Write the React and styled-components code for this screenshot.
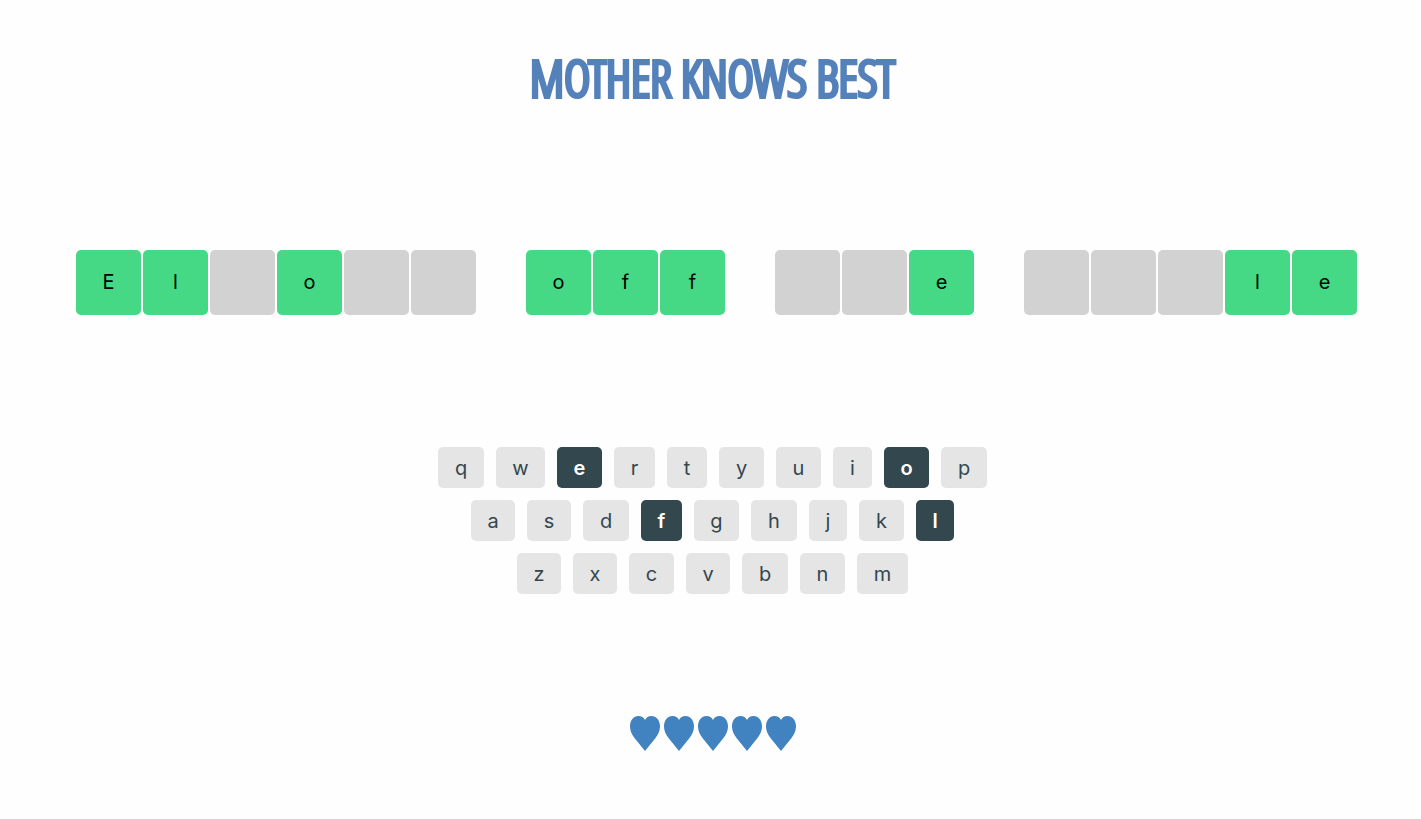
import React from "react";
import styled, { createGlobalStyle } from "styled-components";

const GlobalStyle = createGlobalStyle`
  *, *::before, *::after { box-sizing: border-box; }
  body {
    margin: 0;
    background: #fefefe;
    color: #000;
    font-family: Inter, "Liberation Sans", sans-serif;
    font-size: 20px;
  }
`;

const Page = styled.main`
  display: flex;
  flex-direction: column;
  align-items: center;
  padding: 46px 0 64px 4px;
`;

const Title = styled.h1`
  margin: 0 0 140px;
  color: #5581bb;
  font-family: "Open Sans Condensed Light", "Open Sans Condensed", "Open Sans", sans-serif;
  font-size: 50px;
  font-weight: 300;
  line-height: 64px;
  text-transform: uppercase;
  white-space: nowrap;
  -webkit-text-stroke: 4px #5581bb;
`;

const Phrase = styled.section`
  display: flex;
  justify-content: center;
  gap: 50px;
  margin-bottom: 132px;
  padding-left: 8px;
`;

const Word = styled.div`
  display: flex;
  gap: 2px;
`;

const Cell = styled.span`
  display: flex;
  align-items: center;
  justify-content: center;
  width: 65px;
  height: 65px;
  padding-bottom: 2px;
  border-radius: 5px;
  background: ${({ $open }) => ($open ? "#45d985" : "#d2d2d2")};
`;

const Keyboard = styled.section`
  display: flex;
  flex-direction: column;
  gap: 12px;
  margin-bottom: 122px;
`;

const KeyRow = styled.div`
  display: flex;
  justify-content: center;
  gap: 12px;
`;

const Key = styled.button`
  width: ${({ $width }) => $width}px;
  height: 41px;
  padding: 0;
  border: 0;
  border-radius: 5px;
  background: ${({ $used }) => ($used ? "#33474f" : "#e5e5e5")};
  color: ${({ $used }) => ($used ? "#fff" : "#33474f")};
  font-family: inherit;
  font-size: 20px;
  font-weight: ${({ $used }) => ($used ? 600 : 400)};
  line-height: 24px;
  text-align: center;
  cursor: pointer;
`;

const Lives = styled.section`
  display: flex;
  gap: 4px;
`;

const HeartIcon = styled.svg`
  display: block;
  width: 30px;
  height: 35px;
  fill: #4183c1;
`;

const words = ["El_o__", "off", "__e", "___le"];
const rows = ["qwertyuiop", "asdfghjkl", "zxcvbnm"];
const used = "eofl";

// Keys are as wide as their letter needs.
const keyWidths = { m: 51, w: 49, i: 39, j: 38, l: 38, r: 41, f: 41, t: 40 };
const keyWidth = (char) => {
  if (keyWidths[char]) return keyWidths[char];
  if ("qpdhb".includes(char)) return 46;
  return "aszxv".includes(char) ? 44 : 45;
};

export default function App() {
  return (
    <>
      <GlobalStyle />
      <Page>
        <Title>Mother knows best</Title>
        <Phrase aria-label="Phrase">
          {words.map((word, w) => (
            <Word key={w}>
              {[...word].map((char, i) => (
                <Cell key={i} $open={char !== "_"}>
                  {char === "_" ? "" : char}
                </Cell>
              ))}
            </Word>
          ))}
        </Phrase>
        <Keyboard aria-label="Keyboard">
          {rows.map((row) => (
            <KeyRow key={row}>
              {[...row].map((char) => (
                <Key
                  key={char}
                  type="button"
                  $width={keyWidth(char)}
                  $used={used.includes(char)}
                >
                  {char}
                </Key>
              ))}
            </KeyRow>
          ))}
        </Keyboard>
        <Lives aria-label="Lives">
          {[1, 2, 3, 4, 5].map((life) => (
            <HeartIcon key={life} viewBox="0 0 30 35" aria-hidden="true">
              <path d="M15 35L4.500 22C1.800 18.500 0 14.500 0 10.500C0 4.500 3.500 0 8.500 0C11.500 0 13.800 1.500 15 4C16.200 1.500 18.500 0 21.500 0C26.500 0 30 4.500 30 10.500C30 14.500 28.200 18.500 25.500 22Z" />
            </HeartIcon>
          ))}
        </Lives>
      </Page>
    </>
  );
}
